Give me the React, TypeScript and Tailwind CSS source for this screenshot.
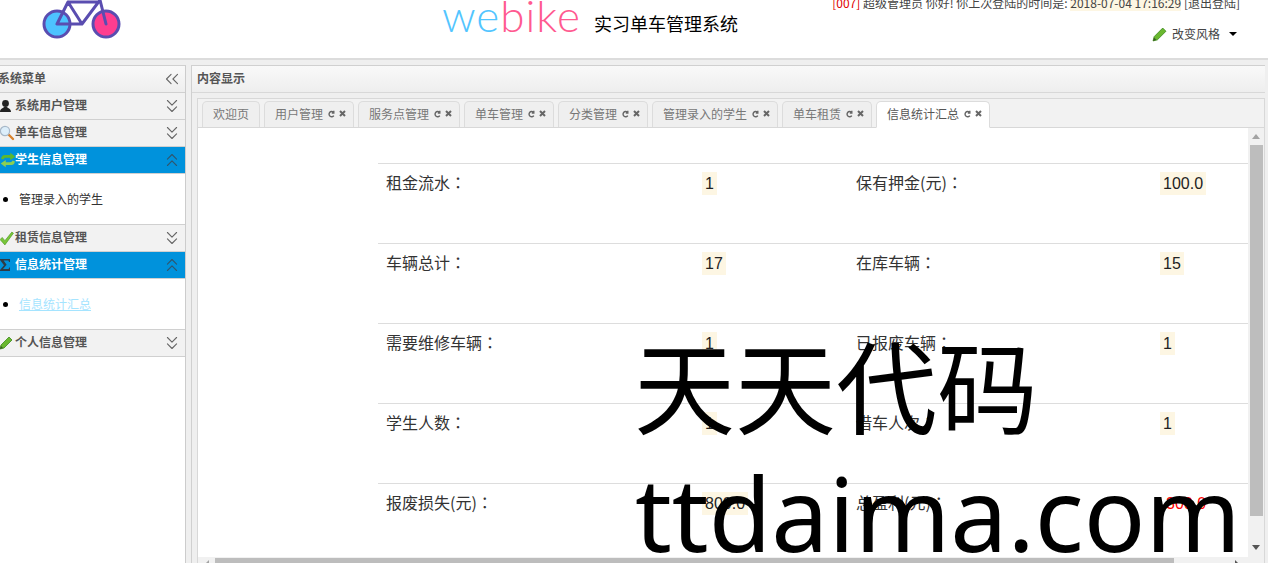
import React from "react";
import { ChevronsDown, ChevronsUp, ChevronsLeft } from "lucide-react";

const cjk = { fontFamily: '"Noto Sans CJK SC", "Noto Sans", sans-serif' };

function Logo() {
  return (
    <svg width="90" height="40" viewBox="0 0 90 40" className="ml-[40px] shrink-0">
      <circle cx="17" cy="24" r="13" fill="#4dc3ff" stroke="#5a4db0" strokeWidth="3" />
      <circle cx="66" cy="24" r="13" fill="#ff3d8f" stroke="#5a4db0" strokeWidth="3" />
      <path d="M17 24 H42 L60 0 L66 24 M17 24 L28 2 L42 24 M28 2 H60" fill="none" stroke="#5a4db0" strokeWidth="3" strokeLinejoin="round" strokeLinecap="round" />
    </svg>
  );
}

function Pencil({ size = 14 }: { size?: number }) {
  return (
    <svg width={size} height={size} viewBox="0 0 14 14" className="shrink-0">
      <path d="M1 13 L2 9 L10 1 L13 4 L5 12 Z" fill="#6ab82f" stroke="#3d8a1d" strokeWidth="0.8" />
      <path d="M1 13 L2 10 L4 12 Z" fill="#3b5a25" />
    </svg>
  );
}
function Person() {
  return (
    <svg width="13" height="14" viewBox="0 0 13 14" className="shrink-0">
      <circle cx="6.5" cy="4.5" r="3.4" fill="#222" />
      <path d="M1 13 C1 9.5 4 9.5 5 8 H8 C9 9.5 12 9.5 12 13 Z" fill="#222" />
    </svg>
  );
}
function Search() {
  return (
    <svg width="16" height="16" viewBox="0 0 16 16" className="shrink-0">
      <path d="M9 9 L14 14" stroke="#d9822b" strokeWidth="2.4" strokeLinecap="round" />
      <circle cx="6" cy="6" r="4.6" fill="#dceefa" stroke="#a8b8c8" strokeWidth="1.2" />
    </svg>
  );
}
function Sync() {
  return (
    <svg width="18" height="16" viewBox="0 0 16 14" className="shrink-0">
      <path d="M2 6 C2 3 4 2.5 6 2.5 H10 V0.5 L14.5 4 L10 7 V5 H6 C5 5 4.5 5.5 4 6.5 Z" fill="#5cb82e" />
      <path d="M14 8 C14 11 12 11.5 10 11.5 H6 V13.5 L1.5 10 L6 7 V9 H10 C11 9 11.5 8.5 12 7.5 Z" fill="#8ccf52" />
    </svg>
  );
}
function Check() {
  return (
    <svg width="15" height="15" viewBox="0 0 14 14" className="shrink-0">
      <path d="M1 8 L3 6 L5.5 9 L12 1 L13.5 2 L5.5 13 Z" fill="#79c63a" stroke="#4f9a22" strokeWidth="0.6" />
    </svg>
  );
}
function Sigma() {
  return (
    <svg width="12" height="14" viewBox="0 0 12 14" className="shrink-0">
      <path d="M1 1 H11 V4 H10 L9.4 2.6 H4.6 L7.6 6.8 L4 11 H9.6 L10.2 9.6 H11 V13 H1 V12 L5 7.2 L1 2 Z" fill="#2f3b46" />
    </svg>
  );
}
function Caret() {
  return <span className="ml-[9px] w-0 h-0 border-x-[4px] border-x-transparent border-t-[4px] border-t-black" />;
}
function TabTools() {
  return (
    <span className="flex items-center ml-[5px] gap-[4px]">
      <svg width="7" height="8" viewBox="0 0 7 8">
        <path d="M5.8 5.6 A2.6 2.6 0 1 1 5.4 2.2 M5.8 0.8 V3 H3.8" fill="none" stroke="#666" strokeWidth="1.4" />
      </svg>
      <svg width="7" height="7" viewBox="0 0 7 7">
        <path d="M1 1 L6 6 M6 1 L1 6" stroke="#666" strokeWidth="2" />
      </svg>
    </span>
  );
}

function AccHead({ icon, title, active }: { icon: React.ReactNode; title: string; active?: boolean }) {
  const Chev = active ? ChevronsUp : ChevronsDown;
  return (
    <div className={`h-[27px] flex items-center border-b border-[#d0d0d0] pl-[5px] pr-[2px] text-[12px] font-bold ${active ? "bg-[#0092dc] text-white" : "bg-[#f2f2f2] text-[#555]"}`}>
      <span className="w-[15px] flex items-center -ml-[1px] mr-[1px]">{icon}</span>
      <span className="flex-1 pb-[2px]">{title}</span>
      <Chev size={22} strokeWidth={1.2} className={active ? "text-[#2f566e]" : "text-[#666]"} />
    </div>
  );
}

function Sidebar() {
  return (
    <aside className="w-[191px] -ml-[5px] shrink-0 bg-white border-r border-[#ccc] border-t border-t-[#d0d0d0] flex flex-col">
      <div className="h-[27px] flex items-center border-b border-[#d0d0d0] pl-[3px] pr-[2px] text-[12px] font-bold text-[#555] bg-gradient-to-b from-[#f9f9f9] to-[#eeeeee]">
        <span className="flex-1 pb-[2px]">系统菜单</span>
        <ChevronsLeft size={22} strokeWidth={1.2} className="text-[#666]" />
      </div>
      <AccHead icon={<Person />} title="系统用户管理" />
      <AccHead icon={<Search />} title="单车信息管理" />
      <AccHead icon={<Sync />} title="学生信息管理" active />
      <ul className="h-[51px] bg-white border-b border-[#d0d0d0] flex items-center pl-[24px] list-disc marker:text-black text-[12px] text-[#333]">
        <li>管理录入的学生</li>
      </ul>
      <AccHead icon={<Check />} title="租赁信息管理" />
      <AccHead icon={<Sigma />} title="信息统计管理" active />
      <ul className="h-[51px] bg-white border-b border-[#d0d0d0] flex items-center pl-[24px] list-disc marker:text-black text-[12px] text-[#333]">
        <li><span className="text-[#a5e4ff] underline">信息统计汇总</span></li>
      </ul>
      <AccHead icon={<Pencil />} title="个人信息管理" />
    </aside>
  );
}

const tabs = [
  { t: "欢迎页", w: "w-[58px]", plain: true },
  { t: "用户管理", w: "w-[90px]" },
  { t: "服务点管理", w: "w-[102px]" },
  { t: "单车管理", w: "w-[90px]" },
  { t: "分类管理", w: "w-[90px]" },
  { t: "管理录入的学生", w: "w-[126px]" },
  { t: "单车租赁", w: "w-[90px]" },
  { t: "信息统计汇总", w: "w-[114px]", active: true },
];

function Tabs() {
  return (
    <div className="h-[29px] pl-[4px] flex items-end gap-[4px] bg-[#f2f2f2] border-b border-[#d8d8d8]">
      {tabs.map((x) => (
        <div
          key={x.t}
          className={`${x.w} shrink-0 rounded-t-[5px] border border-[#dcdcdc] flex items-center pl-[10px] pb-[2px] text-[12px] ${x.active ? "bg-white border-b-white -mb-px h-[27px] text-[#555]" : "bg-[#efefef] border-b-0 h-[26px] text-[#777]"}`}
        >
          {x.t}
          {!x.plain && <TabTools />}
        </div>
      ))}
    </div>
  );
}

const rows: [string, string, string, string, boolean?][] = [
  ["租金流水", "1", "保有押金(元)", "100.0"],
  ["车辆总计", "17", "在库车辆", "15"],
  ["需要维修车辆", "1", "已报废车辆", "1"],
  ["学生人数", "1", "借车人次", "1"],
  ["报废损失(元)", "800.0", "总盈利(元)", "300.0", true],
];

function Label({ t }: { t: string }) {
  return (
    <div className="pl-[8px]">
      {t}
      <span style={{ fontFamily: '"Noto Sans CJK TC", sans-serif' }}>：</span>
    </div>
  );
}

function Value({ v, red }: { v: string; red?: boolean }) {
  return (
    <span
      className={`inline-block h-[23px] leading-[23px] px-[3px] text-[16px] ${red ? "text-[#ff0000]" : "bg-[#fdf6e3] text-[#222]"}`}
      style={{ fontFamily: '"Liberation Sans", sans-serif' }}
    >
      {v}
    </span>
  );
}

function StatTable() {
  return (
    <div className="ml-[180px] mt-[35px] w-[870px]">
      {rows.map((r) => (
        <div key={r[0]} className="h-[80px] border-t border-[#ddd] pt-[7px] grid grid-cols-[324px_146px_312px_88px] text-[16px] text-[#333] leading-[23px]">
          <Label t={r[0]} />
          <div><Value v={r[1]} /></div>
          <Label t={r[2]} />
          <div className={r[4] ? "pl-[3px]" : "pl-[0px]"}><Value v={r[3]} red={r[4]} /></div>
        </div>
      ))}
    </div>
  );
}

function VScroll() {
  return (
    <div className="w-[16px] shrink-0 bg-[#f1f1f1] flex flex-col items-center pt-[6px]">
      <span className="w-0 h-0 border-x-[4px] border-x-transparent border-b-[5px] border-b-[#a3a3a3]" />
      <div className="w-[13px] h-[371px] mt-[6px] shrink-0 bg-[#bdbdbd]" />
      <span className="w-0 h-0 mt-[29px] border-x-[4px] border-x-transparent border-t-[5px] border-t-[#555]" />
    </div>
  );
}

function HScroll() {
  return (
    <div className="h-[6px] bg-[#f1f1f1] flex items-start overflow-hidden">
      <div className="w-[17px] flex justify-center pt-[3px]">
        <span className="w-0 h-0 border-y-[4px] border-y-transparent border-r-[4px] border-r-[#a3a3a3]" />
      </div>
      <div className="w-[959px] h-[6px] mt-[1px] bg-[#bdbdbd]" />
      <div className="ml-[61px] pt-[3px]">
        <span className="block w-0 h-0 border-y-[4px] border-y-transparent border-l-[4px] border-l-[#555]" />
      </div>
    </div>
  );
}

export default function App() {
  return (
    <div className="relative w-[1268px] h-[563px] overflow-hidden bg-white flex flex-col" style={cjk}>
      <header className="h-[60px] shrink-0 border-b-2 border-[#dcdcdc] flex items-start">
        <Logo />
        <div className="ml-[312px] w-[140px] shrink-0 -mt-[9px] h-[48px] flex items-center">
          <span className="text-[44px] font-light tracking-[1px] leading-[48px] whitespace-nowrap" style={{ fontFamily: 'Lato, sans-serif' }}>
            <span className="text-[#52c5ff]">we</span>
            <span className="text-[#ff5a90]">bike</span>
          </span>
        </div>
        <div className="ml-[12px] mt-[14px] text-[18px] leading-[18px] text-black whitespace-nowrap w-[236px] shrink-0">实习单车管理系统</div>
        <div className="flex flex-col items-end w-[410px] shrink-0 -mt-[6px] text-[12px] text-[#444]">
          <div className="whitespace-nowrap leading-[18px]">
            <span className="text-[#e00000]">[007]</span> 超级管理员 你好! 你上次登陆的时间是: <span className="bg-[#fdf6e3]">2018-07-04 17:16:29</span> [退出登陆]
          </div>
          <div className="mt-[13px] flex items-center self-end mr-[3px] h-[18px]">
            <Pencil size={15} />
            <span className="ml-[5px]">改变风格</span>
            <Caret />
          </div>
        </div>
      </header>

      <div className="flex-1 min-h-0 flex bg-[#efefef] pt-[5px]">
        <Sidebar />
        <div className="w-[5px] shrink-0" />
        <main className="flex-1 min-w-0 border-t border-l border-[#d0d0d0] mr-[3px] flex flex-col min-h-0">
          <div className="h-[27px] shrink-0 flex items-center pl-[5px] pb-[2px] text-[12px] font-bold text-[#555] border-b border-[#d8d8d8] bg-gradient-to-b from-[#f9f9f9] to-[#eeeeee]">
            内容显示
          </div>
          <div className="flex-1 min-h-0 pt-[5px] pl-[5px]">
            <div className="h-full border-l border-r border-t border-[#d8d8d8] flex flex-col">
              <Tabs />
              <div className="flex-1 min-h-0 flex bg-white">
                <div className="flex-1 min-w-0 overflow-hidden flex flex-col">
                  <div className="flex-1 min-h-0 overflow-hidden"><StatTable /></div>
                  <HScroll />
                </div>
                <VScroll />
              </div>
            </div>
          </div>
        </main>
      </div>

      <div className="absolute left-[634px] top-[323px] text-[101px] leading-[120px] text-black whitespace-nowrap">天天代码</div>
      <div className="absolute left-[635px] top-[450px] text-[102px] leading-[125px] text-black whitespace-nowrap" style={{ fontFamily: '"Noto Sans", sans-serif' }}>ttdaima.com</div>
    </div>
  );
}
